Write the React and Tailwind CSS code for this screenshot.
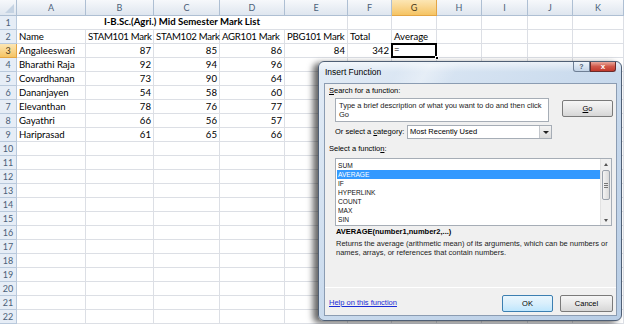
import React from "react";

const COLS = ["A", "B", "C", "D", "E", "F", "G", "H", "I", "J", "K"];
const DATA = [
  ["Angaleeswari", 87, 85, 86, 84, 342],
  ["Bharathi Raja", 92, 94, 96],
  ["Covardhanan", 73, 90, 64],
  ["Dananjayen", 54, 58, 60],
  ["Elevanthan", 78, 76, 77],
  ["Gayathri", 66, 56, 57],
  ["Hariprasad", 61, 65, 66],
];
const FUNCS = ["SUM", "AVERAGE", "IF", "HYPERLINK", "COUNT", "MAX", "SIN"];

function ColHeader({ label, selected }) {
  return (
    <div
      className={
        "flex items-center justify-center border-r border-b text-[9px] " +
        (selected
          ? "bg-gradient-to-b from-[#fce6b4] to-[#f5c462] border-[#e3a545] text-[#4a3a1a]"
          : "bg-gradient-to-b from-[#f6f8fb] to-[#dfe6ef] border-[#aebfd3] text-[#4b5f78]")
      }
    >
      {label}
    </div>
  );
}

function RowHeader({ n, selected }) {
  return (
    <div
      className={
        "flex items-center justify-center border-r border-b text-[9px] leading-none " +
        (selected
          ? "bg-gradient-to-b from-[#fce6b4] to-[#f5c462] border-[#e3a545] text-[#4a3a1a]"
          : "bg-[#e6edf6] border-[#b9c9dc] text-[#4b5f78]")
      }
    >
      {n}
    </div>
  );
}

function Cell({ children, right, bold, className = "" }) {
  return (
    <div
      className={
        "border-r border-b border-[#dcdfe5] text-[9.6px] leading-[13px] whitespace-nowrap overflow-visible flex items-center " +
        (right ? "justify-end pr-[2px] " : "pl-[2px] ") +
        (bold ? "font-bold " : "") +
        className
      }
    >
      {children}
    </div>
  );
}

export default function App() {
  const rows = [];
  for (let r = 1; r <= 22; r++) {
    const cells = [];
    cells.push(<RowHeader key="h" n={r} selected={r === 3} />);
    if (r === 1) {
      cells.push(
        <div
          key="m"
          className="col-span-5 border-r border-b border-[#dcdfe5] flex items-center justify-center text-[9.6px] font-bold"
        >
          I-B.Sc.(Agri.) Mid Semester Mark List
        </div>
      );
      for (let c = 5; c < 11; c++) cells.push(<Cell key={c} />);
    } else if (r === 2) {
      const labels = ["Name", "STAM101 Mark", "STAM102 Mark", "AGR101 Mark", "PBG101 Mark", "Total", "Average"];
      for (let c = 0; c < 11; c++)
        cells.push(
          <Cell key={c} className={c >= 1 && c <= 4 ? "tracking-[-0.25px]" : ""}>
            {labels[c] || ""}
          </Cell>
        );
    } else {
      const d = DATA[r - 3];
      for (let c = 0; c < 11; c++) {
        if (r === 3 && c === 6) {
          cells.push(
            <div key={c} className="relative border-r border-b border-[#dcdfe5] text-[9.6px] flex items-center pl-[2px]">
              =
              <div className="absolute -left-[1px] -top-[1px] w-[46px] h-[15px] border-2 border-black" />
              <div className="absolute -right-[3px] -bottom-[3px] w-[4px] h-[4px] bg-black border border-white" />
            </div>
          );
        } else if (d && c < d.length) {
          cells.push(
            <Cell key={c} right={c > 0}>
              {d[c]}
            </Cell>
          );
        } else cells.push(<Cell key={c} />);
      }
    }
    rows.push(...cells.map((el, i) => React.cloneElement(el, { key: r + "-" + i })));
  }

  return (
    <div className="relative w-[624px] h-[324px] overflow-hidden bg-white font-['Lato',sans-serif] text-black">
      <div className="grid grid-cols-[17px_69px_68px_66px_65px_63px_44px_45px_45px_46px_45px_51px] grid-rows-[16px_repeat(22,14px)]">
        <div className="border-r border-b border-[#aebfd3] bg-gradient-to-b from-[#f6f8fb] to-[#dfe6ef] relative">
          <div className="absolute right-[2px] bottom-[2px] w-0 h-0 border-l-[9px] border-l-transparent border-b-[9px] border-b-[#c5d3e3]" />
        </div>
        {COLS.map((c) => (
          <ColHeader key={c} label={c} selected={c === "G"} />
        ))}
        {rows}
      </div>

      {/* Insert Function dialog */}
      <div className="absolute left-[318px] top-[61px] w-[304px] h-[260px] rounded-[6px] border border-[#4f5f75] bg-gradient-to-br from-[#e3ecf6] via-[#c9daed] to-[#b8cde5] shadow-[-5px_2px_6px_rgba(0,0,0,0.6)] flex flex-col pl-[5px] pr-[4px] pb-[4px] font-['Liberation_Sans',sans-serif]">
        <div className="absolute inset-x-0 top-0 h-[10px] rounded-t-[6px] bg-gradient-to-b from-[rgba(255,255,255,0.6)] to-transparent" />
        <div className="absolute left-[70px] top-[2px] w-[60px] h-[40px] bg-gradient-to-r from-transparent via-[rgba(255,255,255,0.35)] to-transparent -skew-x-[30deg]" />
        <div className="relative h-[21px] flex items-center pl-[1px] text-[8.5px] text-black">Insert Function</div>
        <div className="absolute left-[254px] top-0 w-[17px] h-[10px] rounded-bl-[3px] border border-t-0 border-[#6e7f95] bg-gradient-to-b from-[#eef4fb] to-[#c3d4e7] flex items-center justify-center text-[7px] text-[#4c5b6e] font-bold leading-none">
          ?
        </div>
        <div className="absolute left-[271px] top-0 w-[26px] h-[10px] rounded-br-[3px] border border-t-0 border-[#6a2a2a] bg-gradient-to-b from-[#e8a79c] via-[#d0584a] to-[#c2382b] flex items-center justify-center text-[8px] text-white font-bold leading-none">
          x
        </div>

        <div className="relative flex-1 border border-[#8b9cb2] bg-[#f0f0f0] flex flex-col text-[7.5px] text-black">
          <div className="h-[12px] leading-[12px] pl-[4px] mt-[1px]">
            <u>S</u>earch for a function:
          </div>
          <div className="flex items-start mt-[1px]">
            <div className="ml-[10px] w-[214px] h-[24px] border border-[#a6adb6] bg-white px-[3px] pt-[2px] leading-[9px] text-[#222] whitespace-nowrap">
              Type a brief description of what you want to do and then click
              <br />
              Go
            </div>
            <div className="ml-[13px] mt-[2px] w-[51px] h-[17px] rounded-[2px] border border-[#7a7a7a] bg-gradient-to-b from-[#f6f6f6] via-[#e8e8e8] to-[#d6d6d6] flex items-center justify-center">
              <u>G</u>o
            </div>
          </div>
          <div className="flex items-center mt-[3px] h-[14px]">
            <div className="ml-[10px] w-[72px]">
              Or select a <u>c</u>ategory:
            </div>
            <div className="w-[145px] h-[14px] border border-[#a6adb6] bg-white flex items-center">
              <div className="flex-1 pl-[2px]">Most Recently Used</div>
              <div className="w-[12px] h-[12px] border-l border-[#c3c7cc] bg-gradient-to-b from-[#f4f4f4] to-[#dcdcdc] flex items-center justify-center">
                <div className="w-0 h-0 border-l-[3px] border-r-[3px] border-t-[3px] border-l-transparent border-r-transparent border-t-[#222]" />
              </div>
            </div>
          </div>
          <div className="mt-[5px] h-[10px] leading-[10px] pl-[4px]">
            Select a functio<u>n</u>:
          </div>
          <div className="mt-[4px] ml-[10px] w-[277px] h-[68px] border border-[#a6adb6] bg-white flex">
            <div className="flex-1 pt-[2px] pl-[1px] text-[6.6px]">
              {FUNCS.map((f) => (
                <div
                  key={f}
                  className={
                    "h-[9px] leading-[9px] pl-[1px] " +
                    (f === "AVERAGE" ? "bg-[#3399ff] text-white" : "text-[#111]")
                  }
                >
                  {f}
                </div>
              ))}
            </div>
            <div className="w-[11px] bg-[#f0f0f0] border-l border-[#e2e2e2] flex flex-col">
              <div className="h-[10px] flex items-center justify-center">
                <div className="w-0 h-0 border-l-[2.5px] border-r-[2.5px] border-b-[3px] border-l-transparent border-r-transparent border-b-[#555]" />
              </div>
              <div className="mt-[1px] h-[30px] mx-[1px] rounded-[2px] border border-[#9aa2ac] bg-gradient-to-r from-[#f4f4f4] to-[#dadada] flex flex-col items-center justify-center gap-[1px]">
                <div className="w-[4px] h-px bg-[#777]" />
                <div className="w-[4px] h-px bg-[#777]" />
                <div className="w-[4px] h-px bg-[#777]" />
              </div>
              <div className="flex-1" />
              <div className="h-[10px] flex items-center justify-center">
                <div className="w-0 h-0 border-l-[2.5px] border-r-[2.5px] border-t-[3px] border-l-transparent border-r-transparent border-t-[#555]" />
              </div>
            </div>
          </div>
          <div className="mt-[1px] h-[10px] leading-[10px] pl-[11px] font-bold">
            AVERAGE(number1,number2,...)
          </div>
          <div className="mt-[2px] pl-[11px] leading-[9px] text-[#222]">
            Returns the average (arithmetic mean) of its arguments, which can be numbers or
            <br />
            names, arrays, or references that contain numbers.
          </div>
          <div className="flex-1" />
          <div className="h-px bg-[#dcdcdc] border-b border-white" />
          <div className="h-[27px] flex items-start">
            <div className="pl-[4px] mt-[9px] text-[#1a2bd6] underline">Help on this function</div>
            <div className="flex-1" />
            <div className="mt-[7px] w-[51px] h-[17px] rounded-[2px] border border-[#3c7fb1] bg-gradient-to-b from-[#eaf6fd] via-[#d9effc] to-[#bee6fd] flex items-center justify-center">
              OK
            </div>
            <div className="ml-[7px] mr-[3px] mt-[7px] w-[53px] h-[17px] rounded-[2px] border border-[#7a7a7a] bg-gradient-to-b from-[#f6f6f6] via-[#e8e8e8] to-[#d6d6d6] flex items-center justify-center">
              Cancel
            </div>
          </div>
        </div>
      </div>
    </div>
  );
}
